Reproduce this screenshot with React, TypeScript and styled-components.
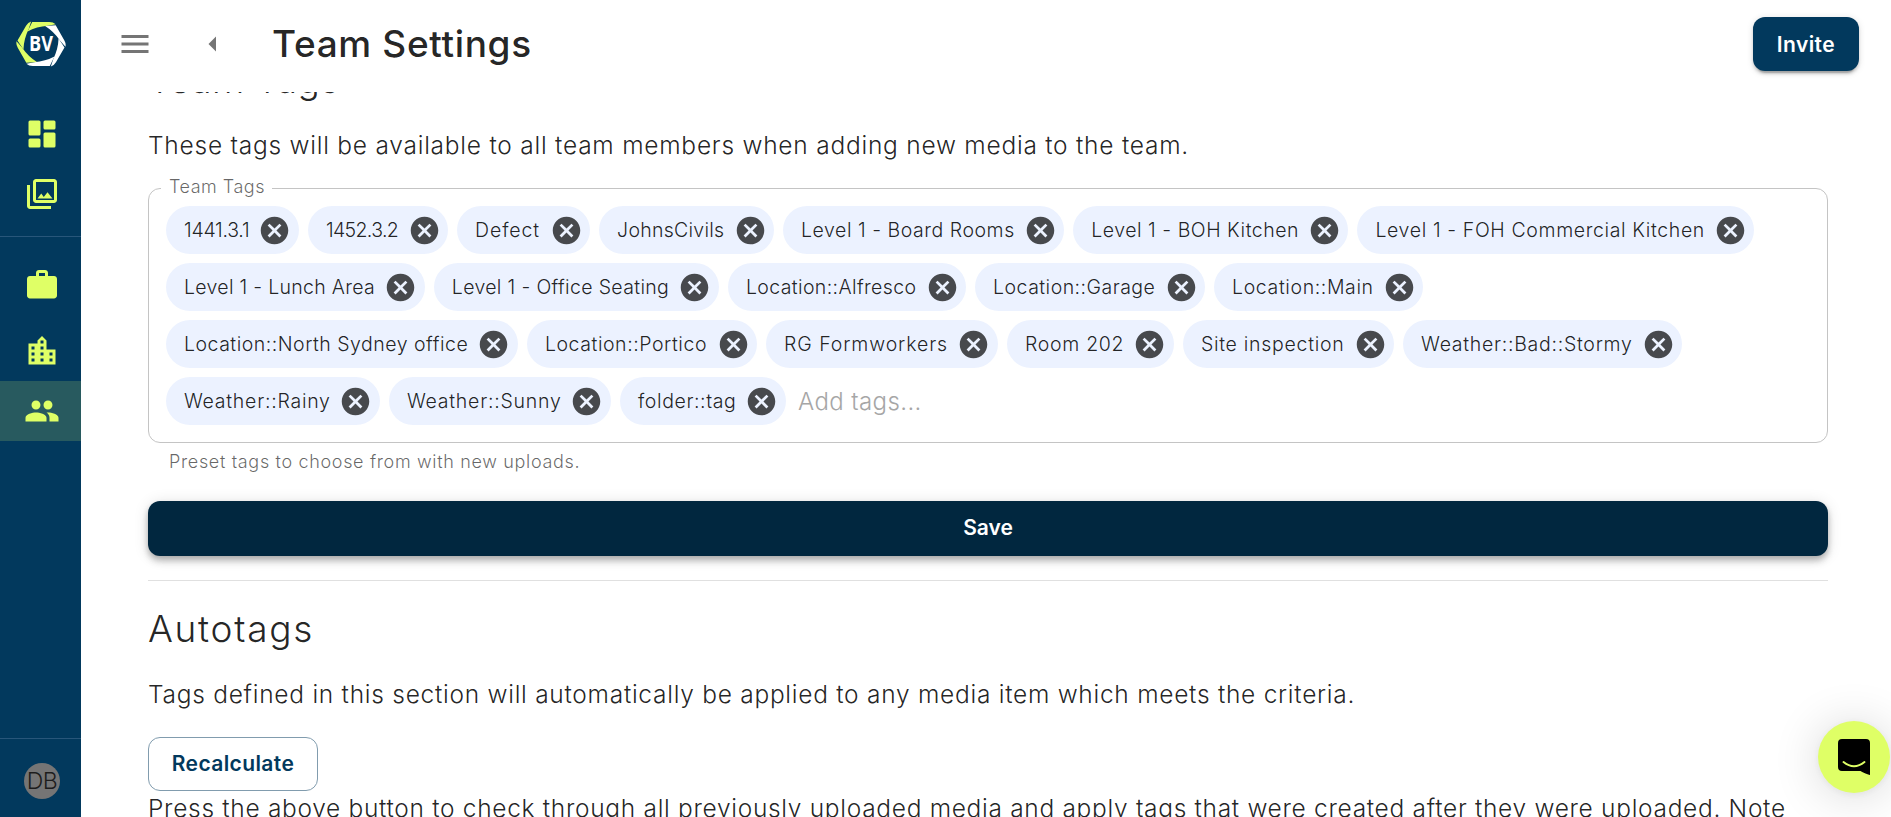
import React from "react";
import styled, { createGlobalStyle, css } from "styled-components";
import {
  MdArrowLeft,
  MdCancel,
  MdLocationCity,
  MdMenu,
  MdOutlinePhotoLibrary,
  MdPeople,
  MdWork,
} from "react-icons/md";

const navy = "#02395d";
const lime = "#dfff66";
const ink = "rgba(0, 0, 0, 0.87)";

const GlobalStyle = createGlobalStyle`
  *, *::before, *::after { box-sizing: border-box; }
  html, body { margin: 0; padding: 0; height: 100%; overflow: hidden; }
  #root { height: 100%; }
  body {
    font-family: Inter, "Liberation Sans", sans-serif;
    font-weight: 300;
    font-size: 24px;
    line-height: 36px;
    color: ${ink};
    background: #fff;
  }
  button, input { font-family: inherit; }
`;

const Shell = styled.div`
  display: flex;
  height: 817px;
  overflow: hidden;
`;

const Sidebar = styled.nav`
  flex: 0 0 81px;
  display: flex;
  flex-direction: column;
  background: ${navy};
`;

const LogoSlot = styled.div`
  height: 104px;
  padding: 20px 0 0 16px;
  svg { display: block; }
`;

const NavGroup = styled.div<{ $gap?: number; $top?: number }>`
  display: flex;
  flex-direction: column;
  gap: ${(p) => p.$gap ?? 0}px;
  padding-top: ${(p) => p.$top ?? 0}px;
`;

const NavItem = styled.a<{ $active?: boolean }>`
  display: flex;
  align-items: center;
  height: 60px;
  padding-left: 24px;
  color: ${lime};
  ${(p) => p.$active && css`background: #285a5f;`}
  svg { width: 36px; height: 36px; }
`;

const NavRule = styled.hr<{ $top: number }>`
  width: 100%;
  height: 1px;
  margin: ${(p) => p.$top}px 0 0;
  border: 0;
  background: #28567a;
`;

const Avatar = styled.div`
  display: flex;
  align-items: center;
  justify-content: center;
  width: 36px;
  height: 36px;
  margin: 24px 0 0 24px;
  border-radius: 50%;
  background: #757575;
  color: #1d1d1d;
  font-size: 23px;
  letter-spacing: -0.4px;
`;

const Page = styled.div`
  flex: 1;
  min-width: 0;
  display: flex;
  flex-direction: column;
`;

const TopBar = styled.header`
  flex: 0 0 92px;
  display: flex;
  align-items: center;
  padding: 0 32px 4px 36px;
  background: #fff;
`;

const IconButton = styled.button<{ $after: number }>`
  display: flex;
  padding: 0;
  margin-right: ${(p) => p.$after}px;
  border: 0;
  background: none;
  color: #757575;
  svg { width: 36px; height: 36px; }
`;

const Title = styled.h1`
  flex: 1;
  margin: 0;
  font-size: 37px;
  line-height: 48px;
  font-weight: 500;
  letter-spacing: 0.65px;
`;

const Button = styled.button<{ $variant: "filled" | "pressed" | "outlined"; $tracking: number }>`
  display: flex;
  align-items: center;
  justify-content: center;
  height: 54px;
  padding: 1px 24px 0;
  border: 0;
  border-radius: 12px;
  font-size: 21px;
  line-height: 36px;
  font-weight: 600;
  letter-spacing: ${(p) => p.$tracking}px;
  color: #fff;
  background: ${navy};
  box-shadow: 0 4.5px 1.5px -3px rgba(0, 0, 0, 0.2), 0 3px 3px rgba(0, 0, 0, 0.14),
    0 1.5px 7.5px rgba(0, 0, 0, 0.12);
  ${(p) =>
    p.$variant === "pressed" &&
    css`
      width: 100%;
      height: 55px;
      padding: 0 0 1px;
      background: #01273f;
      box-shadow: 0 3px 6px -1.5px rgba(0, 0, 0, 0.2), 0 6px 7.5px rgba(0, 0, 0, 0.14),
        0 1.5px 15px rgba(0, 0, 0, 0.12);
    `}
  ${(p) =>
    p.$variant === "outlined" &&
    css`
      width: 170px;
      padding: 0;
      color: ${navy};
      background: #fff;
      border: 1px solid #819cae;
      box-shadow: none;
    `}
`;

const Scroller = styled.main`
  flex: 1;
  min-height: 0;
  overflow: hidden;
  padding: 0 63px 0 67px;
`;

const Scrolled = styled.div`
  margin-top: -36px;
`;

const Heading = styled.h2<{ $tracking: number }>`
  margin: 0;
  font-size: 37px;
  line-height: 48px;
  font-weight: 300;
  letter-spacing: ${(p) => p.$tracking}px;
`;

const Text = styled.p<{ $tracking: number; $top?: number }>`
  margin: ${(p) => p.$top ?? 0}px 0 0;
  padding-bottom: 2px;
  font-size: 24.5px;
  line-height: 34px;
  white-space: nowrap;
  letter-spacing: ${(p) => p.$tracking}px;
`;

const TagField = styled.fieldset`
  margin: 12px 0 0;
  padding: 6px 52px 17px 17px;
  border: 1px solid #c4c4c4;
  border-radius: 12px;
`;

const TagLegend = styled.legend`
  margin-left: -5px;
  padding: 0 7px 2px 8px;
  font-size: 18px;
  line-height: 22px;
  letter-spacing: 0.5px;
  color: rgba(0, 0, 0, 0.6);
`;

const ChipList = styled.div`
  display: flex;
  flex-wrap: wrap;
  gap: 9px;
`;

const Chip = styled.span<{ $width: number; $tracking: number }>`
  display: flex;
  align-items: center;
  justify-content: space-between;
  width: ${(p) => p.$width}px;
  height: 48px;
  padding: 0 7.5px 0 18px;
  border-radius: 24px;
  background: #ecf2ff;
  font-size: 19.5px;
  letter-spacing: ${(p) => p.$tracking}px;
  white-space: nowrap;
  svg { flex: none; width: 33px; height: 33px; color: #47494d; }
`;

const TagInput = styled.input`
  flex: 0 0 160px;
  min-width: 0;
  height: 48px;
  padding: 0 0 0 3px;
  border: 0;
  outline: 0;
  background: none;
  font-size: 24px;
  font-weight: 300;
  letter-spacing: 0.4px;
  &::placeholder { color: #a6a6a6; opacity: 1; }
`;

const Helper = styled.p`
  margin: 4px 0 25px 21px;
  font-size: 18px;
  line-height: 29px;
  letter-spacing: 0.66px;
  color: rgba(0, 0, 0, 0.6);
`;

const Divider = styled.hr`
  height: 1px;
  margin: 24px 0;
  border: 0;
  background: #e0e0e0;
`;

const Actions = styled.div`
  display: flex;
  padding-top: 24px;
`;

const Launcher = styled.button`
  position: fixed;
  right: 1px;
  bottom: 24px;
  display: flex;
  align-items: center;
  justify-content: center;
  width: 72px;
  height: 72px;
  padding: 0;
  border: 0;
  border-radius: 50%;
  background: ${lime};
  box-shadow: 0 1.5px 9px rgba(0, 0, 0, 0.06), 0 3px 48px rgba(0, 0, 0, 0.16);
`;

const tags: { label: string; width: number; tracking: number }[] = [
  { label: "1441.3.1", width: 132.9, tracking: -0.26 },
  { label: "1452.3.2", width: 140.2, tracking: -0.64 },
  { label: "Defect", width: 133, tracking: 0.87 },
  { label: "JohnsCivils", width: 175, tracking: 0.26 },
  { label: "Level 1 - Board Rooms", width: 281.2, tracking: 0.53 },
  { label: "Level 1 - BOH Kitchen", width: 275.2, tracking: 0.52 },
  { label: "Level 1 - FOH Commercial Kitchen", width: 396.9, tracking: 0.62 },
  { label: "Level 1 - Lunch Area", width: 258.8, tracking: 0.3 },
  { label: "Level 1 - Office Seating", width: 285.2, tracking: 0.34 },
  { label: "Location::Alfresco", width: 238.1, tracking: 0.37 },
  { label: "Location::Garage", width: 230, tracking: 0.47 },
  { label: "Location::Main", width: 209.1, tracking: 0.61 },
  { label: "Location::North Sydney office", width: 351.9, tracking: 0.5 },
  { label: "Location::Portico", width: 230.2, tracking: 0.56 },
  { label: "RG Formworkers", width: 231.8, tracking: 0.9 },
  { label: "Room 202", width: 167, tracking: 0.71 },
  { label: "Site inspection", width: 211.2, tracking: 0.72 },
  { label: "Weather::Bad::Stormy", width: 279.2, tracking: 0.72 },
  { label: "Weather::Rainy", width: 213.9, tracking: 0.75 },
  { label: "Weather::Sunny", width: 222.1, tracking: 0.77 },
  { label: "folder::tag", width: 166, tracking: 0.6 },
];

const blades = ["#dfff66", "#fff", "#fff", "#fff", "#dfff66", "#dfff66"];

function Logo() {
  return (
    <svg width="50" height="48" viewBox="-25.6 -24.6 51.2 49.2" aria-label="BV">
      {blades.map((fill, i) => (
        <path
          key={i}
          fill={fill}
          transform={`rotate(${i * 60})`}
          d="M-13.800-12.800L-9-22.600H8.500Q12.500-22.600 15-20.300L7-18.600Q-4.500-17.800-13.800-12.800z"
        />
      ))}
      <text
        x="0"
        y="7.6"
        textAnchor="middle"
        textLength="24.5"
        lengthAdjust="spacingAndGlyphs"
        fill="#fff"
        fontFamily="Open Sans, sans-serif"
        fontWeight="700"
        fontSize="21.5"
      >
        BV
      </text>
    </svg>
  );
}

function DashboardIcon() {
  return (
    <svg viewBox="0 0 24 24" fill="currentColor">
      <rect x="3" y="3" width="8" height="10" rx="1" />
      <rect x="3" y="15" width="8" height="6" rx="1" />
      <rect x="13" y="3" width="8" height="6" rx="1" />
      <rect x="13" y="11" width="8" height="10" rx="1" />
    </svg>
  );
}

function MessengerIcon() {
  return (
    <svg width="32" height="36" viewBox="0 0 32 36">
      <path d="M4 0h24a4 4 0 0 1 4 4v32s-5-1.200-9.500-4H4a4 4 0 0 1-4-4V4a4 4 0 0 1 4-4z" />
      <path
        d="M5.500 23q10.500 8.400 21 0"
        fill="none"
        stroke="#dfff66"
        strokeWidth="2"
        strokeLinecap="round"
      />
    </svg>
  );
}

export default function App() {
  return (
    <Shell>
      <GlobalStyle />
      <Sidebar>
        <LogoSlot>
          <Logo />
        </LogoSlot>
        <NavGroup>
          <NavItem><DashboardIcon /></NavItem>
          <NavItem><MdOutlinePhotoLibrary /></NavItem>
        </NavGroup>
        <NavRule $top={12} />
        <NavGroup $gap={6} $top={18}>
          <NavItem><MdWork /></NavItem>
          <NavItem><MdLocationCity /></NavItem>
        </NavGroup>
        <NavItem $active><MdPeople /></NavItem>
        <NavRule $top={297} />
        <Avatar>DB</Avatar>
      </Sidebar>
      <Page>
        <TopBar>
          <IconButton $after={42} aria-label="Menu"><MdMenu /></IconButton>
          <IconButton $after={41} aria-label="Back"><MdArrowLeft /></IconButton>
          <Title>Team Settings</Title>
          <Button $variant="filled" $tracking={0.4}>Invite</Button>
        </TopBar>
        <Scroller>
          <Scrolled>
            <Heading $tracking={0.4}>Team Tags</Heading>
            <Text $top={24} $tracking={0.76}>
              These tags will be available to all team members when adding new media to the team.
            </Text>
            <TagField>
              <TagLegend>Team Tags</TagLegend>
              <ChipList>
                {tags.map((t) => (
                  <Chip key={t.label} $width={t.width} $tracking={t.tracking}>
                    {t.label}
                    <MdCancel />
                  </Chip>
                ))}
                <TagInput placeholder="Add tags..." />
              </ChipList>
            </TagField>
            <Helper>Preset tags to choose from with new uploads.</Helper>
            <Button $variant="pressed" $tracking={0}>Save</Button>
            <Divider />
            <Heading $tracking={1.7}>Autotags</Heading>
            <Text $top={24} $tracking={0.73}>
              Tags defined in this section will automatically be applied to any media item which meets the criteria.
            </Text>
            <Actions>
              <Button $variant="outlined" $tracking={0.4}>Recalculate</Button>
            </Actions>
            <Text $tracking={0.69}>
              Press the above button to check through all previously uploaded media and apply tags that were created after they were uploaded. Note
            </Text>
          </Scrolled>
        </Scroller>
      </Page>
      <Launcher aria-label="Open chat"><MessengerIcon /></Launcher>
    </Shell>
  );
}
